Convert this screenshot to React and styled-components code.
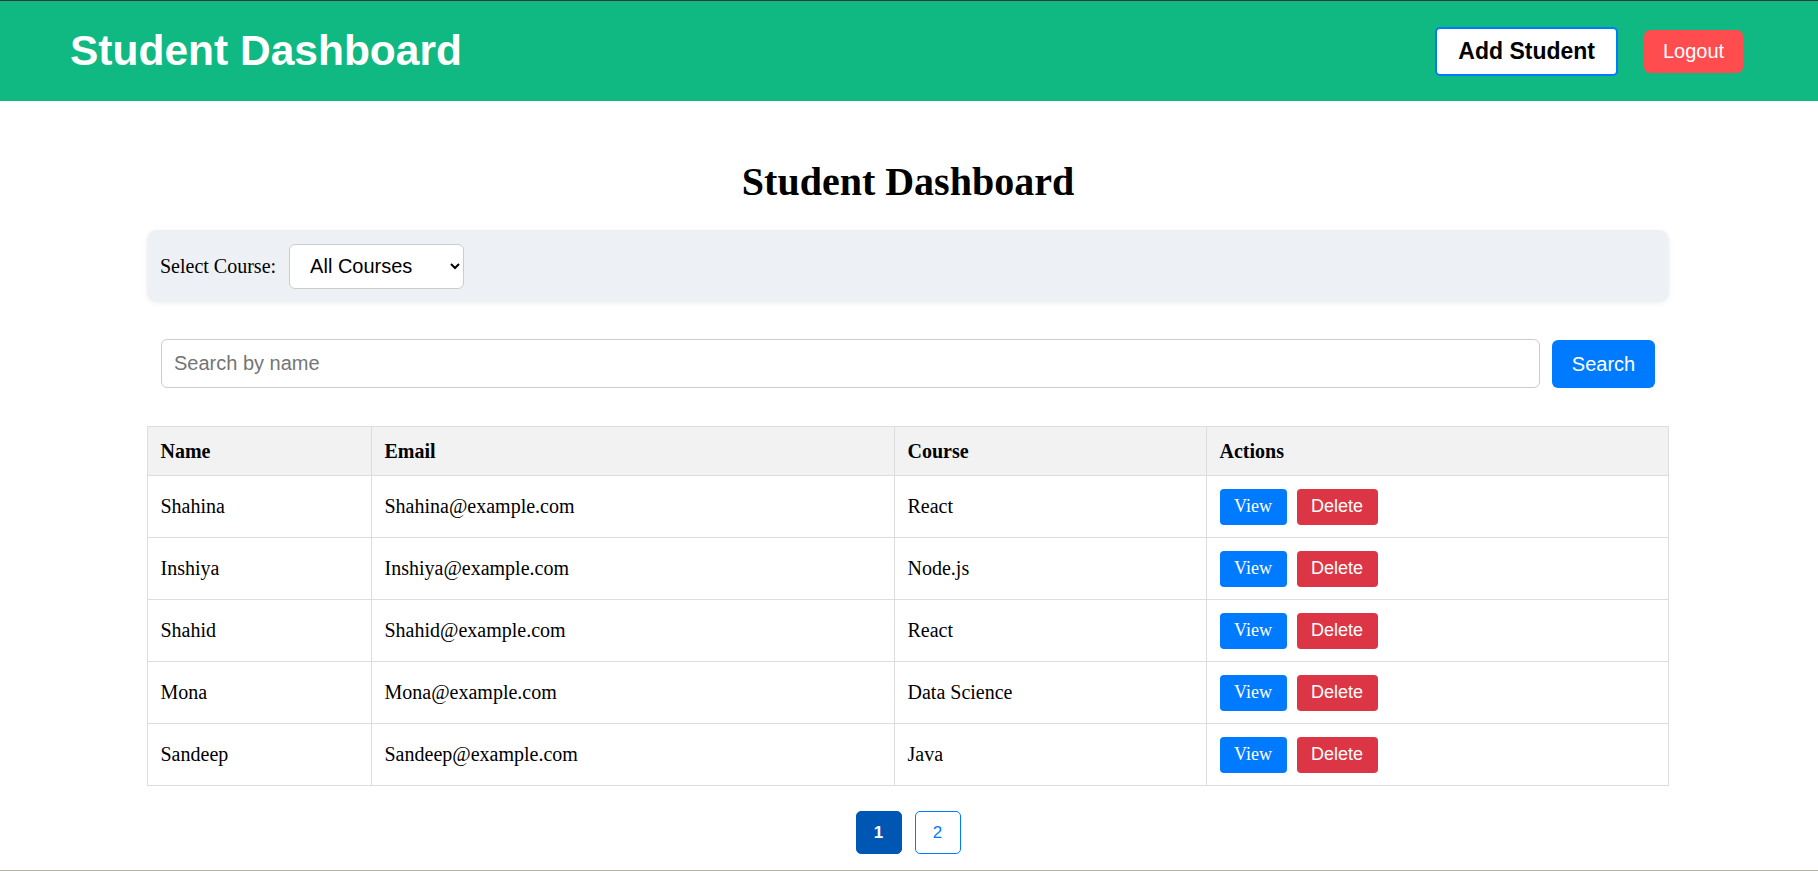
import React from "react";
import styled, { createGlobalStyle } from "styled-components";

const GlobalStyle = createGlobalStyle`
  html, body {
    margin: 0;
    padding: 0;
    background: #fff;
  }
  body {
    font-family: "Liberation Serif", "Times New Roman", serif;
    color: #000;
  }
  * {
    box-sizing: border-box;
  }
`;

const Page = styled.div`
  height: 871px;
  border-top: 1px solid #3a3a3a;
  border-bottom: 1px solid #b3b3a6;
  overflow: hidden;
`;

const Navbar = styled.header`
  display: flex;
  align-items: center;
  justify-content: space-between;
  height: 100px;
  padding: 0 75px 0 70px;
  background-color: #10b981;
`;

const Brand = styled.h1`
  margin: 0;
  font-family: "Liberation Sans", Arial, sans-serif;
  font-size: 42.5px;
  font-weight: bold;
  color: #fff;
`;

const NavActions = styled.div`
  display: flex;
  align-items: center;
  gap: 26px;
`;

const AddButton = styled.button`
  height: 49px;
  padding: 0 21px;
  background: #fff;
  border: 2px solid #007bff;
  border-radius: 5px;
  font-family: "Liberation Sans", Arial, sans-serif;
  font-size: 23px;
  font-weight: bold;
  color: #000;
  cursor: pointer;
`;

const LogoutButton = styled.button`
  width: 99px;
  height: 43px;
  padding: 0;
  background: #ff4d4f;
  border: none;
  border-radius: 6px;
  font-family: "Liberation Sans", Arial, sans-serif;
  font-size: 20px;
  color: #fff;
  cursor: pointer;
`;

const Main = styled.main`
  width: 1522px;
  margin-left: 147px;
  padding-top: 57px;
`;

const Title = styled.h2`
  margin: 0 0 25px;
  text-align: center;
  font-size: 40px;
  font-weight: bold;
`;

const FilterPanel = styled.div`
  display: flex;
  align-items: center;
  gap: 13px;
  height: 72px;
  padding: 0 13px;
  background: #edf0f4;
  border-radius: 10px;
  box-shadow: 0 1px 5px rgba(0, 0, 0, 0.07);
`;

const Label = styled.label`
  font-size: 20px;
`;

const CourseSelect = styled.select`
  width: 175px;
  height: 45px;
  padding: 0 12px 0 16px;
  background: #fff;
  border: 1px solid #ccc;
  border-radius: 6px;
  font-family: "Liberation Sans", Arial, sans-serif;
  font-size: 20px;
  color: #000;
`;

const SearchRow = styled.form`
  display: flex;
  gap: 12px;
  margin: 37px 14px 38px;
`;

const SearchInput = styled.input`
  flex: 1;
  height: 49px;
  padding: 0 12px;
  border: 1px solid #ccc;
  border-radius: 6px;
  font-family: "Liberation Sans", Arial, sans-serif;
  font-size: 20px;
  &::placeholder {
    color: #757575;
  }
`;

const SearchButton = styled.button`
  width: 103px;
  height: 48px;
  margin-top: 1px;
  background: #007bff;
  border: none;
  border-radius: 6px;
  font-family: "Liberation Sans", Arial, sans-serif;
  font-size: 20px;
  color: #fff;
  cursor: pointer;
`;

const Table = styled.table`
  width: 100%;
  table-layout: fixed;
  border-collapse: collapse;
  font-size: 20px;
`;

const Th = styled.th`
  width: ${(p) => p.$width || "auto"};
  padding: 12.5px;
  text-align: left;
  font-weight: bold;
  background: #f2f2f2;
  border: 1px solid #ddd;
`;

const Td = styled.td`
  padding: 12.5px;
  border: 1px solid #ddd;
  vertical-align: middle;
`;

const Actions = styled.div`
  display: flex;
  gap: 10px;
`;

const ActionButton = styled.button`
  width: ${(p) => (p.$danger ? "81px" : "67px")};
  height: 36px;
  padding: 0;
  border: none;
  border-radius: 4px;
  background: ${(p) => (p.$danger ? "#dc3545" : "#007bff")};
  color: #fff;
  font-family: ${(p) =>
    p.$danger
      ? `"Liberation Sans", Arial, sans-serif`
      : `"Liberation Serif", "Times New Roman", serif`};
  font-size: 18px;
  cursor: pointer;
`;

const Pagination = styled.div`
  display: flex;
  justify-content: center;
  gap: 13px;
  margin-top: 25px;
`;

const PageButton = styled.button`
  width: 46px;
  height: 43px;
  padding: 0;
  border: 1px solid ${(p) => (p.$active ? "#0056b3" : "#007bff")};
  border-radius: 5px;
  background: ${(p) => (p.$active ? "#0056b3" : "#fff")};
  color: ${(p) => (p.$active ? "#fff" : "#007bff")};
  font-family: "Liberation Sans", Arial, sans-serif;
  font-size: 17px;
  font-weight: ${(p) => (p.$active ? "bold" : "normal")};
  cursor: pointer;
`;

const students = [
  { name: "Shahina", email: "Shahina@example.com", course: "React" },
  { name: "Inshiya", email: "Inshiya@example.com", course: "Node.js" },
  { name: "Shahid", email: "Shahid@example.com", course: "React" },
  { name: "Mona", email: "Mona@example.com", course: "Data Science" },
  { name: "Sandeep", email: "Sandeep@example.com", course: "Java" },
];

const App = () => {
  return (
    <Page>
      <GlobalStyle />
      <Navbar>
        <Brand>Student Dashboard</Brand>
        <NavActions>
          <AddButton>Add Student</AddButton>
          <LogoutButton>Logout</LogoutButton>
        </NavActions>
      </Navbar>

      <Main>
        <Title>Student Dashboard</Title>

        <FilterPanel>
          <Label htmlFor="course">Select Course:</Label>
          <CourseSelect id="course" defaultValue="all">
            <option value="all">All Courses</option>
            <option value="react">React</option>
            <option value="node">Node.js</option>
            <option value="ds">Data Science</option>
            <option value="java">Java</option>
          </CourseSelect>
        </FilterPanel>

        <SearchRow onSubmit={(e) => e.preventDefault()}>
          <SearchInput placeholder="Search by name" />
          <SearchButton type="submit">Search</SearchButton>
        </SearchRow>

        <Table>
          <thead>
            <tr>
              <Th $width="224px">Name</Th>
              <Th $width="523px">Email</Th>
              <Th $width="312px">Course</Th>
              <Th>Actions</Th>
            </tr>
          </thead>
          <tbody>
            {students.map((s) => (
              <tr key={s.email}>
                <Td>{s.name}</Td>
                <Td>{s.email}</Td>
                <Td>{s.course}</Td>
                <Td>
                  <Actions>
                    <ActionButton>View</ActionButton>
                    <ActionButton $danger>Delete</ActionButton>
                  </Actions>
                </Td>
              </tr>
            ))}
          </tbody>
        </Table>

        <Pagination>
          <PageButton $active>1</PageButton>
          <PageButton>2</PageButton>
        </Pagination>
      </Main>
    </Page>
  );
};

export default App;
